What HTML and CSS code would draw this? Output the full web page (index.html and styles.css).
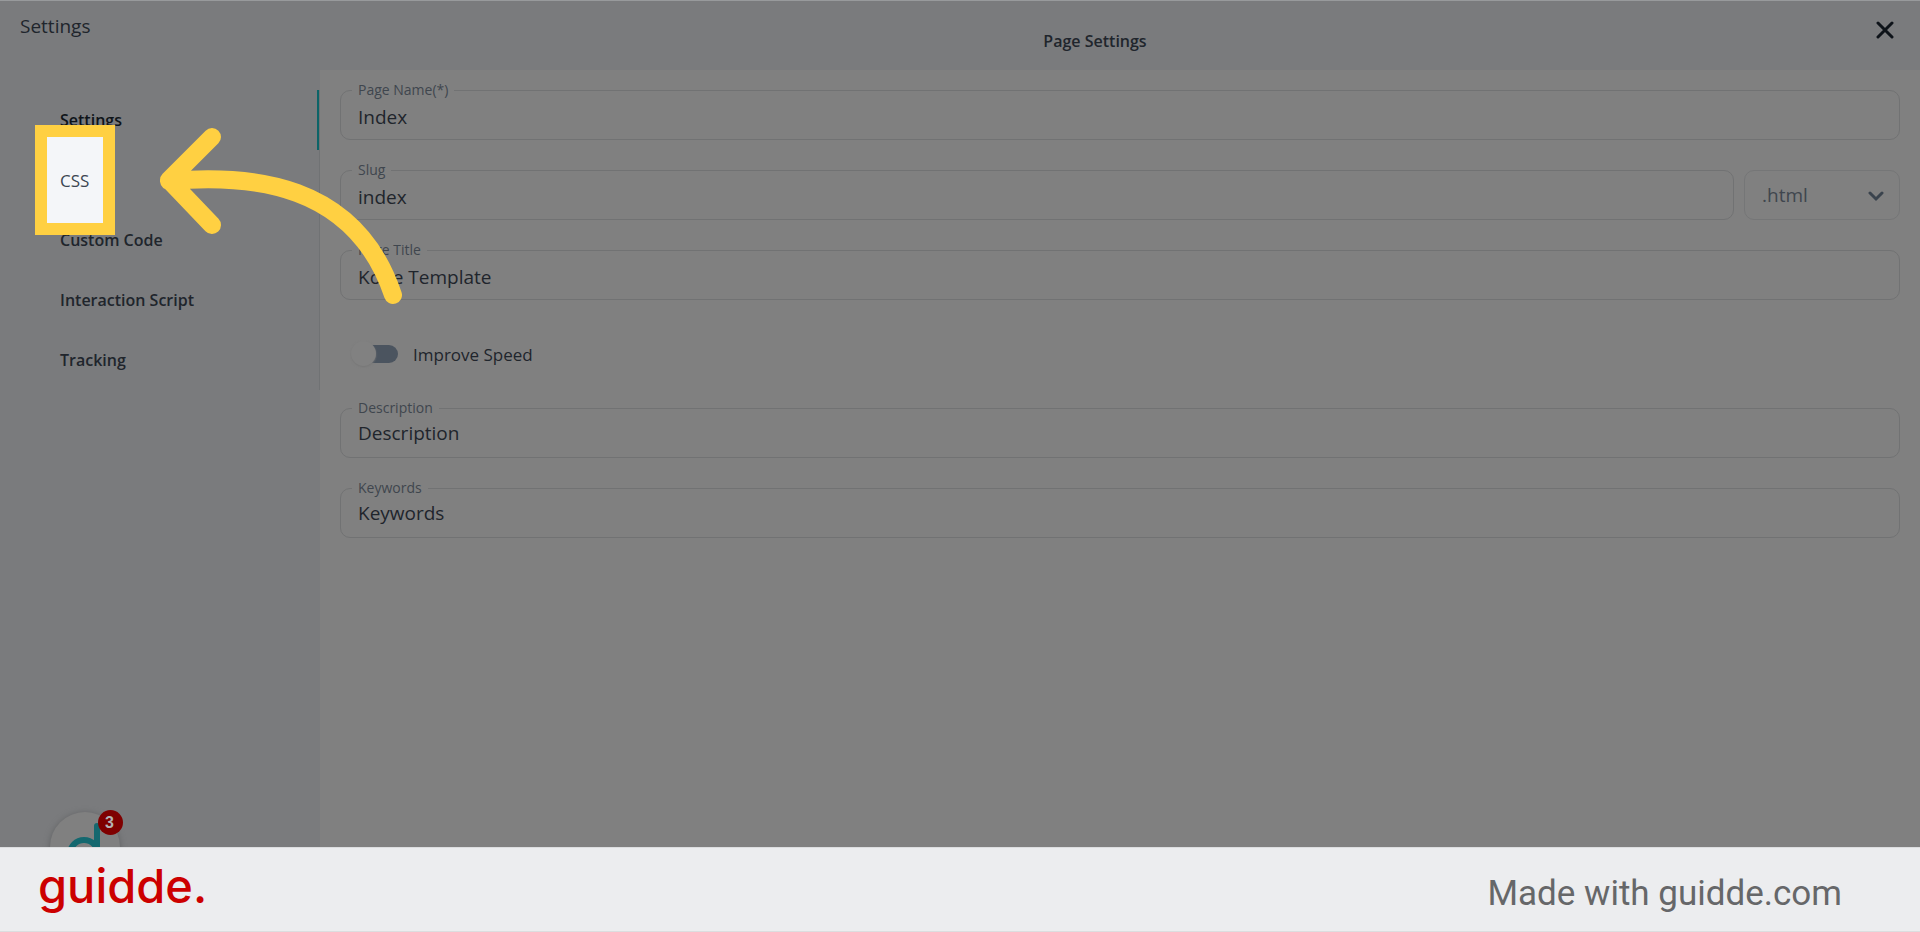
FILE: index.html
```
<!DOCTYPE html>
<html lang="en">
<head>
<meta charset="utf-8">
<title>Page Settings</title>
<link rel="stylesheet" href="styles.css">
</head>
<body>
<div class="app">
  <header class="top">
    <h1 class="top-title">Settings</h1>
    <h2 class="page-title">Page Settings</h2>
    <button class="close" type="button" aria-label="Close">
      <svg width="18" height="18" viewBox="0 0 18 18"><path d="M2 2L16 16M16 2L2 16"/></svg>
    </button>
  </header>
  <div class="body">
    <aside class="side">
      <nav class="tabs">
        <button type="button" class="tab active">Settings</button>
        <button type="button" class="tab marked">CSS</button>
        <button type="button" class="tab">Custom Code</button>
        <button type="button" class="tab">Interaction Script</button>
        <button type="button" class="tab">Tracking</button>
      </nav>
      <div class="chat">
        <svg width="70" height="70" viewBox="0 0 70 70"><circle cx="34" cy="42" r="14"/><path d="M47 14V56"/></svg>
        <span class="badge">3</span>
      </div>
    </aside>
    <main class="form">
      <fieldset class="field">
        <legend><label for="name">Page Name(*)</label></legend>
        <input id="name" type="text" value="Index">
      </fieldset>
      <div class="row">
        <fieldset class="field grow">
          <legend><label for="slug">Slug</label></legend>
          <input id="slug" type="text" value="index">
        </fieldset>
        <div class="select">
          <select aria-label="Extension"><option>.html</option></select>
          <svg width="16" height="12" viewBox="0 0 16 12"><path d="M2 2L8 8L14 2"/></svg>
        </div>
      </div>
      <fieldset class="field">
        <legend><label for="title">Page Title</label></legend>
        <input id="title" type="text" value="Kode Template">
      </fieldset>
      <label class="switch"><input type="checkbox">Improve Speed</label>
      <fieldset class="field area">
        <legend><label for="desc">Description</label></legend>
        <input id="desc" type="text" value="Description">
      </fieldset>
      <fieldset class="field area">
        <legend><label for="keys">Keywords</label></legend>
        <input id="keys" type="text" value="Keywords">
      </fieldset>
    </main>
  </div>
  <footer class="footer">
    <span class="brand">guidde.</span>
    <span class="credit">Made with guidde.com</span>
  </footer>
  <svg class="arrow" width="420" height="320" viewBox="0 0 420 320"><path d="M212 137L169 180L212 225M169 181C250 174 355 182 393 295"/></svg>
</div>
</body>
</html>
```
FILE: styles.css
```
*, *::before { box-sizing: border-box; }
body {
  margin: 0;
  font-family: "Open Sans", "Noto Sans", sans-serif;
  font-size: 19px;
  color: #20252c;
  background: #808080;
}
button, input, select { font: inherit; color: inherit; }
.app {
  position: relative;
  min-height: 100vh;
  display: flex;
  flex-direction: column;
}
.top {
  display: grid;
  grid-template-columns: 320px 1fr 50px;
  height: 70px;
  border-top: 1px solid #989a9c;
  background: #7a7b7d;
}
.top-title {
  margin: 0;
  padding: 11px 20px;
  font-size: 19px;
  line-height: 28px;
  font-weight: 400;
}
.page-title {
  margin: 0;
  padding-top: 26px;
  font-size: 16px;
  line-height: 28px;
  font-weight: 600;
  text-align: center;
}
.close {
  align-self: start;
  height: 58px;
  padding: 0 20px 0 0;
  border: 0;
  background: none;
}
.close svg {
  display: block;
  margin: 0 auto;
  fill: none;
  stroke: #0e1319;
  stroke-width: 3;
  stroke-linecap: round;
}
.body { flex: 1; display: flex; }
.side {
  position: relative;
  width: 320px;
  flex: none;
  padding-top: 20px;
  overflow: hidden;
  background: #7a7b7d;
}
.tabs {
  display: flex;
  flex-direction: column;
  border-right: 1px solid #707274;
}
.tab {
  height: 60px;
  padding: 0 0 0 60px;
  border: 0;
  background: none;
  font-size: 16px;
  font-weight: 600;
  text-align: left;
}
.tab.active {
  color: #0f1419;
  border-right: 2px solid #0c6468;
}
.tab.marked {
  position: relative;
  z-index: 1;
  font-size: 17px;
  font-weight: 400;
  color: #3c4652;
}
.tab.marked::before {
  content: "";
  position: absolute;
  z-index: -1;
  left: 35px;
  top: -25px;
  width: 80px;
  height: 110px;
  border: 12px solid #ffd042;
  background: #f4f6f9;
}
.chat {
  position: absolute;
  left: 50px;
  bottom: -35px;
  width: 70px;
  height: 70px;
  border-radius: 50%;
  background: #808080;
  box-shadow: 0 1px 6px #5f6062;
}
.chat svg { display: block; fill: none; stroke: #14686f; stroke-width: 6; stroke-linecap: round; }
.badge {
  position: absolute;
  left: 48px;
  top: -2px;
  width: 25px;
  height: 25px;
  padding-right: 2px;
  border-radius: 50%;
  background: #7f0000;
  color: #b4b4b4;
  font: bold 16px/25px "Liberation Sans", sans-serif;
  text-align: center;
}
.form {
  flex: 1;
  padding: 11px 20px;
  display: flex;
  flex-direction: column;
  gap: 20px;
}
.field {
  min-width: 0;
  height: 59px;
  margin: 0 0 1px;
  padding: 0 11px;
  border: 1px solid #717273;
  border-radius: 10px;
}
.field legend {
  height: 18px;
  padding: 0 6px;
  font-size: 14px;
  line-height: 18px;
  color: #3f464e;
}
.field input {
  display: block;
  width: 100%;
  height: 38px;
  padding: 0 6px 3px;
  border: 0;
  outline: 0;
  background: none;
}
.area input { padding-bottom: 7px; }
.row { display: flex; gap: 10px; }
.grow { flex: 1; }
.select {
  position: relative;
  width: 156px;
  padding-top: 9px;
}
.select select {
  width: 100%;
  height: 50px;
  padding: 0 17px;
  appearance: none;
  border: 1px solid #757677;
  border-radius: 10px;
  background: none;
  color: #3f464e;
}
.select svg {
  position: absolute;
  right: 16px;
  top: 30px;
  fill: none;
  stroke: #3a434d;
  stroke-width: 3;
  stroke-linecap: round;
  pointer-events: none;
}
.switch {
  display: flex;
  align-items: center;
  gap: 15px;
  height: 58px;
  padding: 8px 0 0 18px;
  font-size: 17px;
}
.switch input {
  appearance: none;
  position: relative;
  width: 40px;
  height: 18px;
  margin: 0;
  border-radius: 9px;
  background: #4b545f;
}
.switch input::before {
  content: "";
  position: absolute;
  left: -7px;
  top: -4px;
  width: 25px;
  height: 25px;
  border-radius: 50%;
  background: #818181;
  box-shadow: 0 1px 2px #777;
}
.footer {
  position: relative;
  display: flex;
  justify-content: space-between;
  align-items: center;
  height: 85px;
  padding: 0 78px 0 38px;
  border-top: 1px solid #dcdddf;
  border-bottom: 1px solid #dcdddf;
  background: #ecedef;
}
.brand {
  padding-bottom: 8px;
  font-family: Inter, sans-serif;
  font-size: 47px;
  line-height: 60px;
  font-weight: 500;
  color: #c00;
}
.credit {
  padding-top: 8px;
  font-family: Roboto, sans-serif;
  font-size: 35px;
  line-height: 42px;
  color: #666769;
}
.arrow {
  position: absolute;
  left: 0;
  top: 0;
  z-index: 2;
  pointer-events: none;
  fill: none;
  stroke: #ffd042;
  stroke-width: 18;
  stroke-linecap: round;
  stroke-linejoin: round;
}
```
